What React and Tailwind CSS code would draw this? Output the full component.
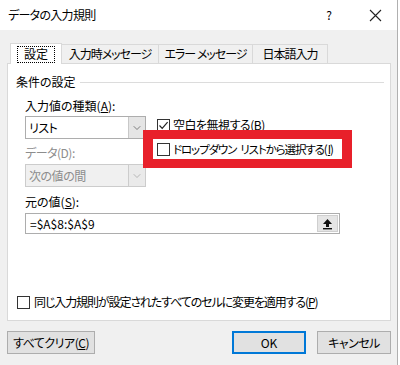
import { ChevronDown } from "lucide-react";

const Check = ({ checked }) => (
    <span className="w-[13px] h-[13px] shrink-0 border border-[#333333] bg-white flex items-center justify-center">
        {checked && (
            <svg width="11" height="11" viewBox="0 0 11 11" fill="none">
                <path d="M1.5 5.5 L4.2 8.3 L9.6 2.2" stroke="#222" strokeWidth="1.2" />
            </svg>
        )}
    </span>
);

const Combo = ({ value, disabled }) => (
    <div className={`w-[121px] h-[23px] flex border ${disabled ? "border-[#cccccc] bg-[#f0f0f0] text-[#8d8d8d]" : "border-[#adadad] bg-white text-black"}`}>
        <div className="flex-1 flex items-center pl-[3px] tracking-[-0.5px]">{value}</div>
        <div className={`w-[17px] flex items-center justify-center border-l ${disabled ? "border-[#cccccc] bg-[#eaeaea]" : "border-[#c8c8c8] bg-[#e5e5e5]"}`}>
            <ChevronDown size={12} strokeWidth={1.3} className={disabled ? "text-[#999999]" : "text-[#444444]"} />
        </div>
    </div>
);

const Tab = ({ children, selected, w }) =>
    selected ? (
        <div className="h-[21px] w-[52px] border border-b-0 border-[#d9d9d9] bg-white flex items-center justify-center relative z-10 -mb-px">
            <span className="px-[6px] h-[17px] flex items-center border border-dotted border-black">{children}</span>
        </div>
    ) : (
        <div className={`h-[19px] ${w} border border-b-0 border-l-0 border-[#d9d9d9] bg-[#f0f0f0] flex items-center justify-center whitespace-nowrap tracking-[-1px]`}>
            {children}
        </div>
    );

export default function App() {
    return (
        <div className="w-[400px] h-[365px] bg-white overflow-hidden text-[12px] leading-[16px] text-black
            font-['Noto_Sans_CJK_JP','Noto_Sans',sans-serif] [font-feature-settings:'palt']">
            <div className="w-[398px] h-[365px] bg-[#f0f0f0] border-r border-[#b0b0b0] flex flex-col">
                {/* title bar */}
                <div className="h-[30px] bg-white flex items-center shrink-0">
                    <span className="pl-[8px] flex-1 tracking-[-0.7px]">データの入力規則</span>
                    <span className="w-[14px] text-center mr-[33px]">?</span>
                    <svg width="13" height="13" viewBox="0 0 13 13" className="mr-[15px]">
                        <path d="M1 1 L12 12 M12 1 L1 12" stroke="#222" strokeWidth="1.1" />
                    </svg>
                </div>

                {/* tabs */}
                <div className="mt-[12px] ml-[10px] flex items-end h-[21px]">
                    <Tab selected>設定</Tab>
                    <Tab w="w-[97px]">入力時メッセージ</Tab>
                    <Tab w="w-[94px]">エラー メッセージ</Tab>
                    <Tab w="w-[75px]">日本語入力</Tab>
                </div>

                {/* panel */}
                <div className="ml-[7px] w-[384px] h-[258px] bg-white border border-[#d9d9d9] flex flex-col">
                    <div className="mt-[10px] h-[16px] pl-[8px] flex items-center">
                        <span>条件の設定</span>
                        <div className="flex-1 h-px bg-[#dcdcdc] ml-[4px] mr-[6px]"></div>
                    </div>

                    <div className="pl-[17px] flex flex-col">
                        <div className="mt-[8px] h-[16px]">入力値の種類(<span className="underline">A</span>):</div>
                        <div className="mt-[2px] flex">
                            <div className="flex flex-col">
                                <Combo value="リスト" />
                                <div className="mt-[6px] h-[16px] text-[#8d8d8d] tracking-[-0.5px]">データ(D):</div>
                                <div className="mt-[3px]"><Combo value="次の値の間" disabled /></div>
                            </div>
                            <div className="ml-[11px] -mt-[3px] flex flex-col">
                                <div className="h-[24px] flex items-center gap-[3px]">
                                    <Check checked />
                                    <span className="tracking-[-0.5px]">空白を無視する(<span className="underline">B</span>)</span>
                                </div>
                                <div className="h-[24px] flex items-center gap-[3px] relative">
                                    <Check />
                                    <span className="text-[11.5px] tracking-[-1.1px] whitespace-nowrap">
                                        ドロップダウン<span className="ml-[4px]">リストから選択する(<span className="underline ml-[1px]">I</span>)</span>
                                    </span>
                                    <div className="absolute left-[-14px] top-[-7px] w-[209px] h-[38px] border-x-[10px] border-y-[9px] border-[#e8202a] pointer-events-none"></div>
                                </div>
                            </div>
                        </div>
                        <div className="mt-[7px] h-[16px]">元の値(<span className="underline">S</span>):</div>
                        <div className="mt-[3px] w-[315px] h-[21px] border border-[#adadad] flex">
                            <div className="flex-1 flex items-center pl-[4px]">=$A$8:$A$9</div>
                            <div className="w-[21px] my-[1px] mr-[1px] bg-[#e5e5e5] border border-[#cfcfcf] flex items-center justify-center">
                                <svg width="11" height="12" viewBox="0 0 11 12">
                                    <path d="M5.5 1 L10 6 L7 6 L7 9 L4 9 L4 6 L1 6 Z" fill="#111" />
                                    <rect x="1" y="10" width="9" height="1.4" fill="#111" />
                                </svg>
                            </div>
                        </div>
                    </div>

                    <div className="mt-auto mb-[10px] pl-[9px] h-[16px] flex items-center gap-[4px]">
                        <Check />
                        <span className="tracking-[-1.1px] whitespace-nowrap">同じ入力規則が設定されたすべてのセルに変更を適用する(<span className="underline">P</span>)</span>
                    </div>
                </div>

                {/* buttons */}
                <div className="mt-[10px] flex items-center">
                    <button className="ml-[7px] w-[88px] h-[23px] bg-[#e1e1e1] border border-[#adadad] tracking-[-0.5px]">
                        すべてクリア(<span className="underline">C</span>)
                    </button>
                    <button className="ml-auto w-[74px] h-[23px] bg-[#e1e1e1] border-2 border-[#0078d7]">OK</button>
                    <button className="ml-[11px] mr-[6px] w-[74px] h-[23px] bg-[#e1e1e1] border border-[#adadad] tracking-[-0.5px]">キャンセル</button>
                </div>
            </div>
        </div>
    );
}
